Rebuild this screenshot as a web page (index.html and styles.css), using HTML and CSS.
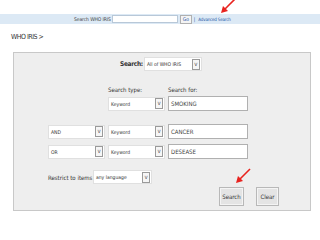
FILE: index.html
```html
<!DOCTYPE html>
<html lang="en">
<head>
    <meta charset="UTF-8">
    <meta name="viewport" content="width=device-width, initial-scale=1.0">
    <title>WHO IRIS - Advanced Search</title>
    <link rel="stylesheet" href="styles.css">
</head>
<body>
    <div class="topbar">
        <span class="topbar-label">Search WHO IRIS</span>
        <span class="topbar-input"></span>
        <span class="go-button">Go</span>
        <span class="sep">|</span>
        <a class="adv-link" href="#">Advanced Search</a>
    </div>
    <div class="crumb">WHO IRIS &gt;</div>

    <div class="panel">
        <div class="row scope-row">
            <span class="scope-label">Search:</span>
            <div class="select scope-select"><span>All of WHO IRIS</span><span class="caret">v</span></div>
        </div>

        <div class="row label-row">
            <span class="col-b">Search type:</span>
            <span class="col-c">Search for:</span>
        </div>
        <div class="row term-row first-term">
            <div class="select col-b"><span>Keyword</span><span class="caret">v</span></div>
            <div class="text-box col-c">SMOKING</div>
        </div>

        <div class="row term-row second-term">
            <div class="select col-a"><span>AND</span><span class="caret">v</span></div>
            <div class="select col-b"><span>Keyword</span><span class="caret">v</span></div>
            <div class="text-box col-c">CANCER</div>
        </div>
        <div class="row term-row third-term">
            <div class="select col-a"><span>OR</span><span class="caret">v</span></div>
            <div class="select col-b"><span>Keyword</span><span class="caret">v</span></div>
            <div class="text-box col-c">DESEASE</div>
        </div>

        <div class="row restrict-row">
            <span class="restrict-label">Restrict to items in</span>
            <div class="select lang-select"><span>any language</span><span class="caret">v</span></div>
        </div>

        <div class="row button-row">
            <span class="btn btn-search">Search</span>
            <span class="btn btn-clear">Clear</span>
        </div>
    </div>

    <!-- red annotation arrows -->
    <svg class="arrow arrow-top" width="20" height="18" viewBox="0 0 20 18">
        <line x1="16" y1="1" x2="5" y2="12" stroke="#e8231f" stroke-width="1.6"/>
        <polygon points="2,15 4,8 9,13" fill="#e8231f"/>
    </svg>
    <svg class="arrow arrow-search" width="20" height="18" viewBox="0 0 20 18">
        <line x1="16" y1="1" x2="5" y2="12" stroke="#e8231f" stroke-width="1.6"/>
        <polygon points="2,15 4,8 9,13" fill="#e8231f"/>
    </svg>
</body>
</html>
```

FILE: styles.css
```css
body {
    margin: 0;
    padding: 0;
    width: 320px;
    height: 240px;
    background-color: #ffffff;
    font-family: "DejaVu Sans Condensed", "DejaVu Sans", sans-serif;
    font-stretch: condensed;
    font-size: 6px;
    color: #333333;
    position: relative;
    overflow: hidden;
    white-space: nowrap;
}
.topbar {
    margin-top: 14px;
    height: 10px;
    background-color: #dce9f5;
    display: flex;
    align-items: center;
    padding-left: 74px;
    font-size: 5px;
    color: #444444;
}
.topbar-label {
    margin-right: 1px;
    letter-spacing: -0.1px;
}
.topbar-input {
    width: 64px;
    height: 6px;
    background-color: #ffffff;
    border: 1px solid #b8c8d8;
}
.go-button {
    margin-left: 2px;
    width: 10px;
    height: 7px;
    line-height: 7px;
    text-align: center;
    background-color: #f4f4f4;
    border: 1px solid #b0b0b0;
    color: #2a5aa8;
}
.sep {
    margin-left: 2px;
    color: #2a5aa8;
}
.adv-link {
    margin-left: 3px;
    color: #2a5aa8;
    text-decoration: none;
    font-size: 4.5px;
    letter-spacing: -0.2px;
}
.crumb {
    margin: 8px 0 0 11px;
    font-size: 7px;
    color: #333333;
    height: 10px;
    line-height: 10px;
    letter-spacing: -0.5px;
}
.panel {
    margin: 10px 0 0 13px;
    width: 262px;
    height: 157px;
    background-color: #eeeeee;
    border: 1px solid #c8c8c8;
    padding-left: 34px;
}
.row {
    display: flex;
    align-items: center;
}
.col-a, .col-b {
    width: 57px;
    margin-right: 3px;
}
.col-c {
    width: 80px;
}
.label-row .col-b,
.first-term .col-b {
    margin-left: 60px;
}
.select {
    height: 14px;
    background-color: #ffffff;
    border: 1px solid #e0e0e0;
    box-sizing: border-box;
    display: flex;
    align-items: center;
    justify-content: space-between;
    padding: 0 1px 0 2px;
    font-size: 5px;
    color: #333333;
}
.caret {
    width: 6px;
    height: 9px;
    border: 1px solid #9a9a9a;
    background-color: #f6f6f6;
    font-size: 6px;
    line-height: 8px;
    text-align: center;
    color: #555555;
}
.text-box {
    height: 15px;
    background-color: #ffffff;
    border: 1px solid #b0b0b0;
    box-sizing: border-box;
    padding-left: 2px;
    line-height: 13px;
    font-size: 6px;
    color: #444444;
}
.scope-row {
    margin-top: 4px;
    margin-left: 72px;
}
.scope-label {
    font-size: 6.5px;
    font-weight: bold;
    color: #333333;
    letter-spacing: -0.3px;
    margin-right: 1px;
}
.scope-select {
    width: 58px;
}
.label-row {
    margin-top: 13px;
    height: 10px;
    font-size: 6px;
}
.first-term {
    margin-top: 2px;
}
.second-term {
    margin-top: 13px;
}
.third-term {
    margin-top: 5px;
}
.restrict-row {
    margin-top: 11px;
}
.restrict-label {
    width: 45px;
    font-size: 6px;
}
.lang-select {
    width: 59px;
}
.button-row {
    margin-top: 3px;
    margin-left: 171px;
}
.btn {
    height: 19px;
    line-height: 17px;
    box-sizing: border-box;
    border: 1px solid #b8b8b8;
    background-color: #e4e4e4;
    box-shadow: inset 0 0 0 1px #f4f4f4;
    text-align: center;
    font-size: 6px;
    color: #333333;
}
.btn-search {
    width: 25px;
}
.btn-clear {
    width: 23px;
    margin-left: 12px;
}
.arrow {
    position: absolute;
}
.arrow-top {
    left: 219px;
    top: -2px;
}
.arrow-search {
    left: 234px;
    top: 168px;
}
```
